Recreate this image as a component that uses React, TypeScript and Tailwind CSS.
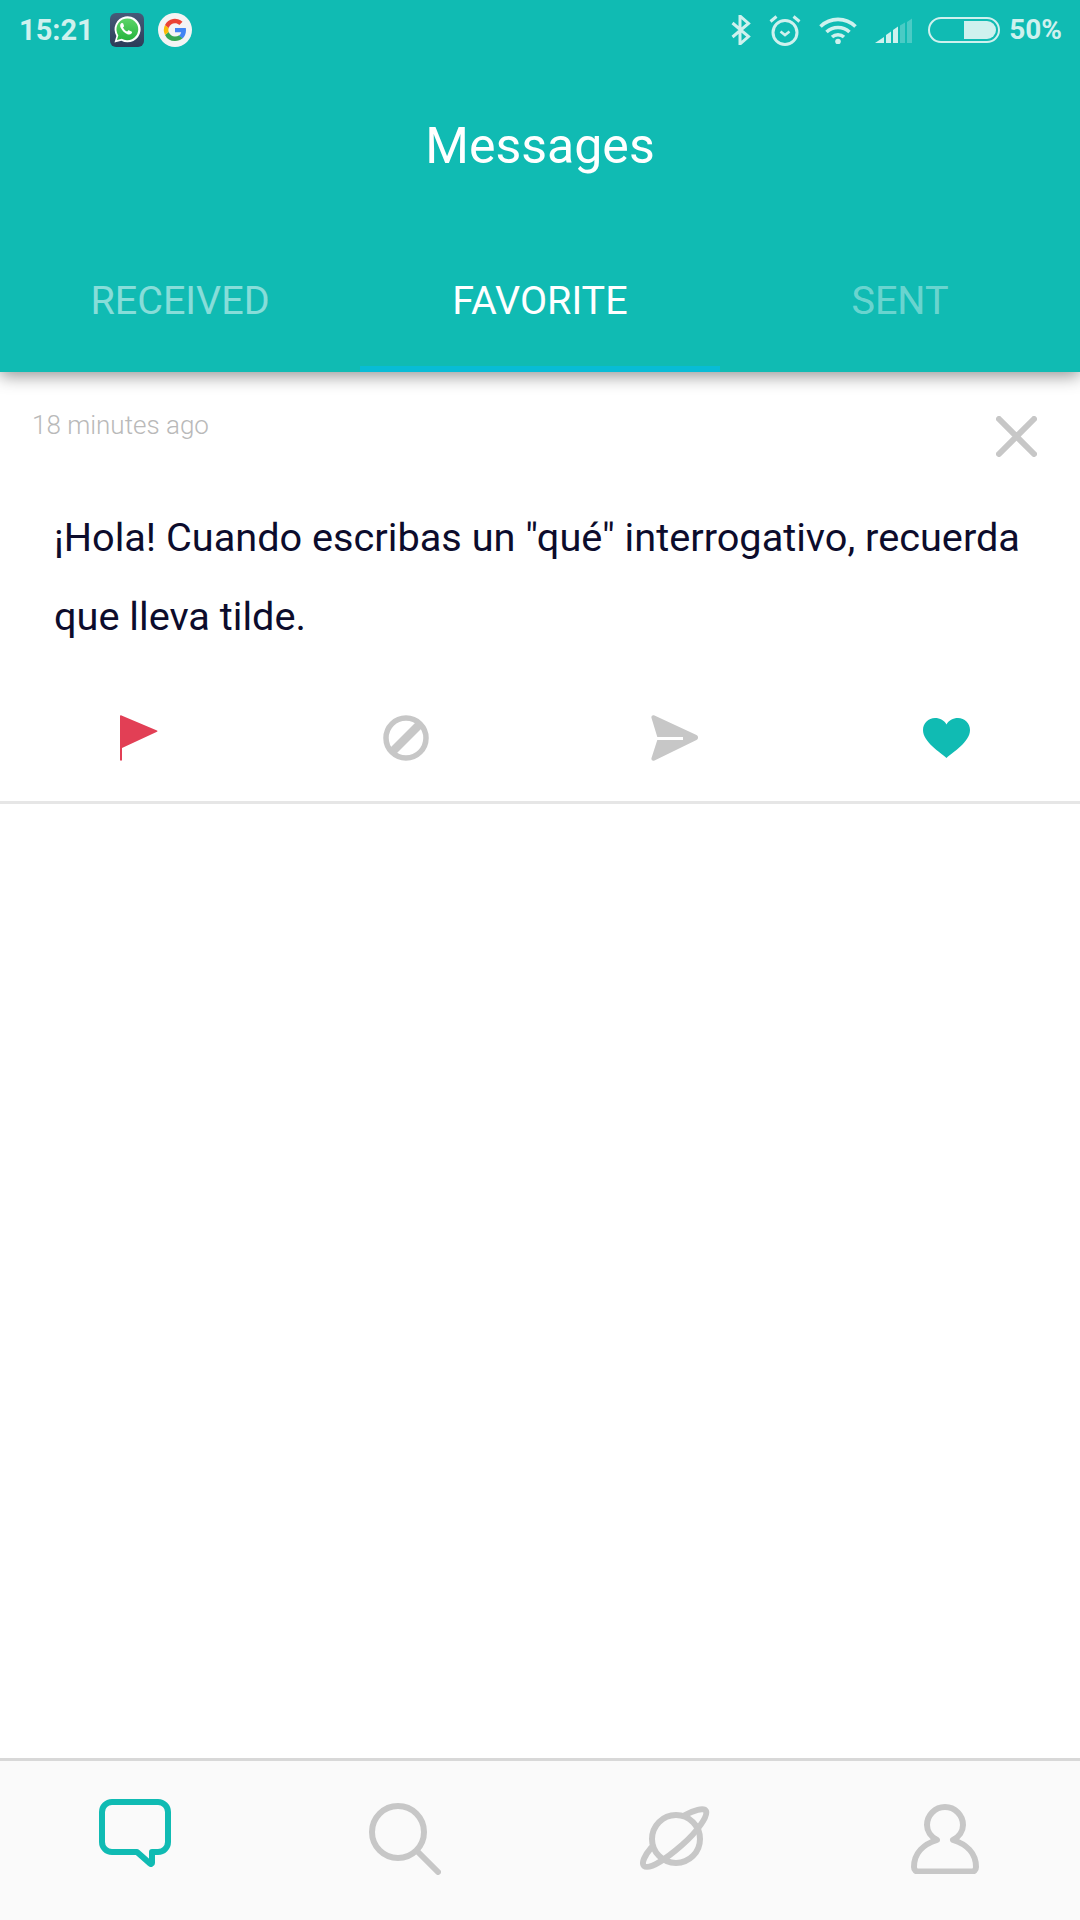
import React from "react";

const Whatsapp = () => (
  <svg width="34" height="34" viewBox="0 0 34 34" className="shrink-0">
    <defs>
      <linearGradient id="wa" x1="0" y1="0" x2="0" y2="1">
        <stop offset="0" stopColor="#465a78" />
        <stop offset="1" stopColor="#2c3c58" />
      </linearGradient>
      <linearGradient id="wg" x1="0" y1="0" x2="0" y2="1">
        <stop offset="0" stopColor="#5cd568" />
        <stop offset="1" stopColor="#27b43e" />
      </linearGradient>
    </defs>
    <rect width="34" height="34" rx="6" fill="url(#wa)" />
    <path d="M4.5 29.5l1.9-6.6a13 13 0 1 1 5 4.8z" fill="#fff" />
    <path d="M6.9 27l1.4-4.6a10.9 10.9 0 1 1 3.5 3.3z" fill="url(#wg)" />
    <path d="M13.2 10.6c-.5-.9-1.3-.8-1.9-.3-1.2 1-1.5 2.5-.7 4.3 1.4 3 3.7 5.3 6.8 6.6 1.8.7 3.3.4 4.3-.9.5-.7.5-1.3-.2-1.7l-2.2-1.2c-.6-.3-1-.2-1.4.3l-.7.8c-1.9-.8-3.3-2.2-4.2-4.1l.7-.7c.4-.4.4-.8.2-1.3z" fill="#fff" />
  </svg>
);

const Google = () => (
  <svg width="34" height="34" viewBox="0 0 34 34" className="shrink-0">
    <circle cx="17" cy="17" r="17" fill="#f4f4f4" />
    <path d="M28 17.3c0-.9-.1-1.5-.2-2.3H17v4.3h6.2a5.4 5.4 0 0 1-2.3 3.5l3.6 2.8c2.2-2 3.5-4.9 3.5-8.3z" fill="#4285f4" />
    <path d="M17 28c3 0 5.500-1 7.500-2.700l-3.600-2.800c-1 .7-2.300 1.100-3.900 1.100-2.900 0-5.400-2-6.300-4.600l-3.700 2.900A11 11 0 0 0 17 28z" fill="#34a853" />
    <path d="M10.700 19c-.5-1.300-.5-2.800 0-4.100L7 12a11 11 0 0 0 0 9.900z" fill="#fbbc05" />
    <path d="M17 10.300c1.700 0 3.200.6 4.300 1.700l3.200-3.200A11 11 0 0 0 7 12l3.700 2.900c.9-2.600 3.400-4.600 6.300-4.600z" fill="#ea4335" />
  </svg>
);

const StatusIcons = () => (
  <div className="flex items-center">
    <svg width="20" height="30" viewBox="0 0 20 30" fill="none" stroke="#cff1ee" strokeWidth="3" className="mr-[18px]">
      <path d="M1.500 8l16 13.500L9 29V1l8.500 7.500L1.500 22" />
    </svg>
    <svg width="32" height="32" viewBox="0 0 32 32" fill="none" stroke="#cff1ee" className="mr-[18px]">
      <circle cx="16" cy="18.500" r="12" strokeWidth="3" />
      <path d="M11.500 17.500l4.500 3.500 4.500-3.500" strokeWidth="2.600" />
      <path d="M1.500 7.500L7.500 2.500M30.500 7.500L24.500 2.500" strokeWidth="3" />
    </svg>
    <svg width="38" height="28" viewBox="0 0 38 28" fill="none" stroke="#cff1ee" strokeWidth="3.600" className="mr-[18px]">
      <path d="M1.500 10.500a25 25 0 0 1 35 0" />
      <path d="M7.500 16a17 17 0 0 1 23 0" />
      <path d="M13 21a9 9 0 0 1 12 0" />
      <circle cx="19" cy="25.500" r="2.800" fill="#cff1ee" stroke="none" />
    </svg>
    <svg width="37" height="25" viewBox="0 0 37 25" className="mr-[16px]">
      <path d="M0 25l9-6v6z" fill="#cff1ee" />
      <path d="M11 25v-8l5-3.500V25z" fill="#cff1ee" />
      <path d="M18 25V12l5-3.500V25z" fill="#cff1ee" />
      <path d="M25 25V7.500l5-3V25z" fill="#cff1ee" fillOpacity=".3" />
      <path d="M32 25V4l5-3.500V25z" fill="#cff1ee" fillOpacity=".3" />
    </svg>
    <div className="relative mr-[9px] h-[26px] w-[72px] rounded-[13px] border-2 border-[#cff1ee]">
      <div className="absolute bottom-[2px] right-[2px] top-[2px] w-[32px] rounded-r-[9px] bg-[#cff1ee]" />
    </div>
    <span className="text-[28px] font-bold leading-none text-[#cff1ee] [font-family:Roboto,sans-serif]">50%</span>
  </div>
);

const Flag = () => (
  <svg width="38" height="46" viewBox="0 0 38 46" className="ml-[2px]">
    <path d="M0 1.500c0-1 .6-1.500 1.500-1L37 15.500c.6.300.6 1 0 1.300L2 33v12.500H0z" fill="#e23f55" />
  </svg>
);
const Ban = () => (
  <svg width="46" height="46" viewBox="0 0 46 46" fill="none" stroke="#c7c7c7" strokeWidth="5.500">
    <circle cx="23" cy="23" r="20" />
    <path d="M9 37L37 9" strokeWidth="8.500" />
  </svg>
);
const Send = () => (
  <svg width="47" height="46" viewBox="0 0 47 46">
    <path d="M3.500.500L45.500 20c2 1 2 4 0 5L3.500 45.500c-2 .8-3.500-.500-3-2.500l5.800-18h25.700v-3H6.300L.500 3c-.5-2 1-3.300 3-2.500z" fill="#c7c7c7" />
  </svg>
);
const Heart = () => (
  <svg width="47" height="40" viewBox="0 0 47 40">
    <path d="M23.500 40C17 34 0 24 0 12 0 5 5.500 0 12 0c5 0 9.500 2.500 11.500 6.500C25.500 2.500 30 0 35 0c6.500 0 12 5 12 12 0 12-17 22-23.500 28z" fill="#10bbb3" />
  </svg>
);
const X = () => (
  <svg width="41" height="41" viewBox="0 0 41 41" stroke="#c7c7c7" strokeWidth="6" strokeLinecap="round">
    <path d="M3 3l35 35M38 3L3 38" />
  </svg>
);

const Chat = () => (
  <svg width="72" height="68" viewBox="0 0 72 68" fill="none" stroke="#10bbb3" strokeWidth="6" strokeLinejoin="round">
    <path d="M13 3h46a10 10 0 0 1 10 10v30a10 10 0 0 1-10 10h-6v11c0 1-1 1.500-2 .5L38 53H13a10 10 0 0 1-10-10V13A10 10 0 0 1 13 3z" />
  </svg>
);
const Search = () => (
  <svg width="72" height="72" viewBox="0 0 72 72" fill="none" stroke="#c7c7c7" strokeWidth="6" strokeLinecap="round">
    <circle cx="29" cy="29" r="26" />
    <path d="M49 49l20 20" />
  </svg>
);
const Planet = () => (
  <svg width="70" height="66" viewBox="0 0 70 66" fill="none" stroke="#c7c7c7" strokeWidth="6">
    <circle cx="36" cy="33" r="24" />
    <path d="M45 9c8-4.500 19-8 21-4 2 5-8 20-24 34S9 64 4 60c-3-3 1-11 7-18" strokeLinecap="round" />
  </svg>
);
const User = () => (
  <svg width="68" height="70" viewBox="0 0 68 70" fill="none" stroke="#c7c7c7" strokeWidth="6" strokeLinejoin="round">
    <path d="M26 36c-6-3-10-9-10-15a18 18 0 0 1 36 0c0 6-4 12-10 15 13 4 23 13 23 27 0 3-2 4.500-4 4.500H7c-2 0-4-1.500-4-4.500 0-14 10-23 23-27z" />
  </svg>
);

export default function App() {
  return (
    <div className="flex h-[1920px] w-[1080px] flex-col overflow-hidden bg-white [font-family:Roboto,sans-serif]">
      <header className="relative z-10 h-[372px] shrink-0 bg-[#10bbb3] shadow-[0_4px_16px_rgba(0,0,0,0.42)]">
        <div className="flex h-[60px] items-center justify-between pl-[19px] pr-[18px]">
          <div className="flex items-center">
            <span className="mr-[16px] text-[29px] font-bold leading-none text-[#cff1ee] [font-family:Roboto,sans-serif]">15:21</span>
            <Whatsapp />
            <span className="w-[14px]" />
            <Google />
          </div>
          <StatusIcons />
        </div>
        <h1 className="mt-[54px] text-center text-[50px] font-normal leading-[64px] text-white">Messages</h1>
        <div className="mt-[91px] grid h-[64px] grid-cols-3">
          <div className="text-center text-[39.500px] font-normal leading-[64px] text-white/50">RECEIVED</div>
          <div className="text-center text-[39.500px] font-normal leading-[64px] text-white">FAVORITE</div>
          <div className="text-center text-[39.500px] font-normal leading-[64px] text-white/40">SENT</div>
        </div>
        <div className="absolute bottom-0 left-[360px] h-[6px] w-[360px] bg-[#08bcd6]" />
      </header>

      <main className="flex-1">
        <article className="h-[432px] border-b-[3px] border-[#e6e6e6]">
          <div className="flex items-start justify-between pl-[32px] pr-[43px] pt-[34px]">
            <span className="text-[26px] font-light leading-[38px] text-[#b9b9b9]">18 minutes ago</span>
            <span className="mt-[10px]"><X /></span>
          </div>
          <p className="mt-[41px] pl-[54px] pr-[40px] text-[39.7px] leading-[79px] text-[#0c0c2c]">
            ¡Hola! Cuando escribas un "qué" interrogativo, recuerda que lleva tilde.
          </p>
          <div className="mt-[59px] grid grid-cols-4 justify-items-center px-[4px]">
            <Flag />
            <Ban />
            <Send />
            <span className="ml-[8px] flex h-[46px] items-center"><Heart /></span>
          </div>
        </article>
      </main>

      <nav className="grid h-[162px] shrink-0 grid-cols-4 items-center justify-items-center border-t-[3px] border-[#d8d8d8] bg-[#fafafa] pb-[4px]">
        <span className="-mt-[12px]"><Chat /></span>
        <Search />
        <Planet />
        <User />
      </nav>
    </div>
  );
}
